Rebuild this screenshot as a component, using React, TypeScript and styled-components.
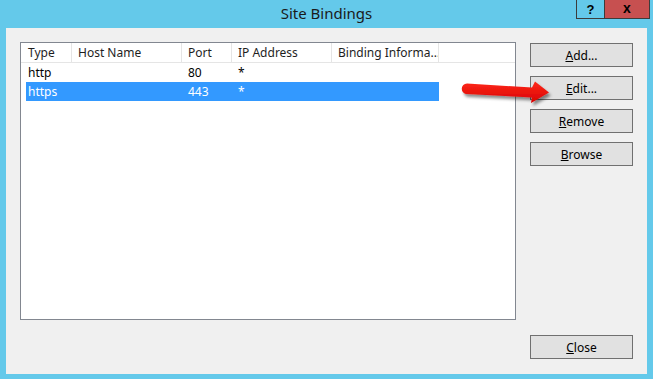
import styled, { createGlobalStyle } from "styled-components";

const GlobalStyle = createGlobalStyle`
  html, body {
    margin: 0;
    padding: 0;
  }
  body {
    font-family: "Noto Sans", "Open Sans", sans-serif;
    color: #000;
  }
`;

type Column = { title: string; width: number };

const columns: Column[] = [
  { title: "Type", width: 51 },
  { title: "Host Name", width: 110 },
  { title: "Port", width: 50 },
  { title: "IP Address", width: 100 },
  { title: "Binding Informa...", width: 107 },
];

const bindings = [
  { type: "http", host: "", port: "80", ip: "*", info: "" },
  { type: "https", host: "", port: "443", ip: "*", info: "" },
];

export default function App() {
  const selected = 1;

  return (
    <>
      <GlobalStyle />
      <Window>
        <TitleBar>
          <span />
          <Title>Site Bindings</Title>
          <Controls>
            <HelpButton>?</HelpButton>
            <CloseX>x</CloseX>
          </Controls>
        </TitleBar>

        <Client>
          <Main>
            <ListBox>
              <Header>
                {columns.map((c, i) => (
                  <HeaderCell key={c.title} $width={c.width} $first={i === 0}>
                    {c.title}
                  </HeaderCell>
                ))}
              </Header>
              {bindings.map((b, i) => (
                <Row key={b.type} $selected={i === selected}>
                  <Cell $first>{b.type}</Cell>
                  <Cell>{b.host}</Cell>
                  <Cell>{b.port}</Cell>
                  <Cell>{b.ip}</Cell>
                  <Cell>{b.info}</Cell>
                </Row>
              ))}
            </ListBox>

            <Actions>
              <Button><Key>A</Key>dd...</Button>
              <Button><Key>E</Key>dit...</Button>
              <Button><Key>R</Key>emove</Button>
              <Button><Key>B</Key>rowse</Button>
            </Actions>
          </Main>

          <Footer>
            <Button><Key>C</Key>lose</Button>
          </Footer>
        </Client>

        {/* red callout arrow pointing at Edit... */}
        <Arrow width="100" height="35" viewBox="0 0 100 35">
          <defs>
            <linearGradient id="arrowFill" x1="0" y1="0" x2="0" y2="1">
              <stop offset="0" stopColor="#ff2a1a" />
              <stop offset="1" stopColor="#d60000" />
            </linearGradient>
            <filter id="arrowShadow" x="-10%" y="-30%" width="130%" height="180%">
              <feDropShadow dx="2" dy="3" stdDeviation="1.6" floodColor="#000" floodOpacity="0.45" />
            </filter>
          </defs>
          <path
            d="M12,8.5 L77,12.5 L80,6.5 L94,17.5 L76,28 L77,22.5 L12,19 A5.25,5.25 0 0 1 12,8.5 Z"
            fill="url(#arrowFill)"
            filter="url(#arrowShadow)"
          />
        </Arrow>
      </Window>
    </>
  );
}

const Window = styled.div`
  position: relative;
  width: 653px;
  height: 379px;
  box-sizing: border-box;
  padding: 0 6px 5px 6px;
  background-color: #64c9ea;
  display: flex;
  flex-direction: column;
  overflow: hidden;
`;

const TitleBar = styled.div`
  height: 28px;
  flex-shrink: 0;
  display: grid;
  grid-template-columns: 1fr auto 1fr;
`;

const Title = styled.div`
  padding-top: 3px;
  font-size: 15px;
  line-height: 20px;
  color: #1a1a1a;
  white-space: nowrap;
`;

const Controls = styled.div`
  justify-self: end;
  align-self: start;
  margin-right: -3px;
  display: flex;
  height: 19px;
`;

const HelpButton = styled.div`
  width: 27px;
  height: 18px;
  border: 1px solid #3c3c3c;
  border-top: none;
  border-right: none;
  display: flex;
  align-items: center;
  justify-content: center;
  font-family: "Liberation Sans", Arial, sans-serif;
  font-weight: bold;
  font-size: 13px;
  color: #000;
`;

const CloseX = styled(HelpButton)`
  width: 46px;
  border-right: 1px solid #3c3c3c;
  background-color: #c75050;
  font-size: 14px;
  padding-bottom: 2px;
  box-sizing: border-box;
  height: 19px;
`;

const Client = styled.div`
  flex: 1;
  background-color: #f0f0f0;
  padding: 14px;
  display: flex;
  flex-direction: column;
`;

const Main = styled.div`
  display: flex;
  gap: 14px;
  height: 278px;
`;

const ListBox = styled.div`
  flex: 1;
  background-color: #fff;
  border: 1px solid #828790;
  box-sizing: border-box;
  font-size: 12px;
`;

const Header = styled.div`
  display: flex;
  height: 19px;
  border-bottom: 1px solid #e5e5e5;
  width: 100%;
`;

const HeaderCell = styled.div<{ $width: number; $first?: boolean }>`
  width: ${(p) => p.$width}px;
  box-sizing: border-box;
  padding-left: ${(p) => (p.$first ? 7 : 6)}px;
  padding-top: 1px;
  border-right: 1px solid #e5e5e5;
  line-height: 18px;
  color: #1e1e1e;
  white-space: nowrap;
  overflow: hidden;
`;

const Row = styled.div<{ $selected?: boolean }>`
  display: grid;
  grid-template-columns: 46px 110px 50px 100px 107px;
  margin-left: 5px;
  width: 413px;
  height: 19px;
  line-height: 20px;
  background-color: ${(p) => (p.$selected ? "#3399ff" : "transparent")};
  color: ${(p) => (p.$selected ? "#fff" : "#000")};
`;

const Cell = styled.div<{ $first?: boolean }>`
  padding-left: ${(p) => (p.$first ? 2 : 6)}px;
  white-space: nowrap;
  overflow: hidden;
`;

const Actions = styled.div`
  width: 103px;
  display: flex;
  flex-direction: column;
  gap: 9px;
  padding-top: 1px;
`;

const Button = styled.button`
  width: 103px;
  height: 24px;
  box-sizing: border-box;
  background-color: #e1e1e1;
  border: 1px solid #707070;
  border-radius: 0;
  padding: 0;
  font-family: "Noto Sans", "Open Sans", sans-serif;
  font-size: 12px;
  color: #000;
`;

const Key = styled.span`
  text-decoration: underline;
`;

const Footer = styled.div`
  margin-top: 15px;
  display: flex;
  justify-content: flex-end;
`;

const Arrow = styled.svg`
  position: absolute;
  left: 455px;
  top: 75px;
  overflow: visible;
`;
